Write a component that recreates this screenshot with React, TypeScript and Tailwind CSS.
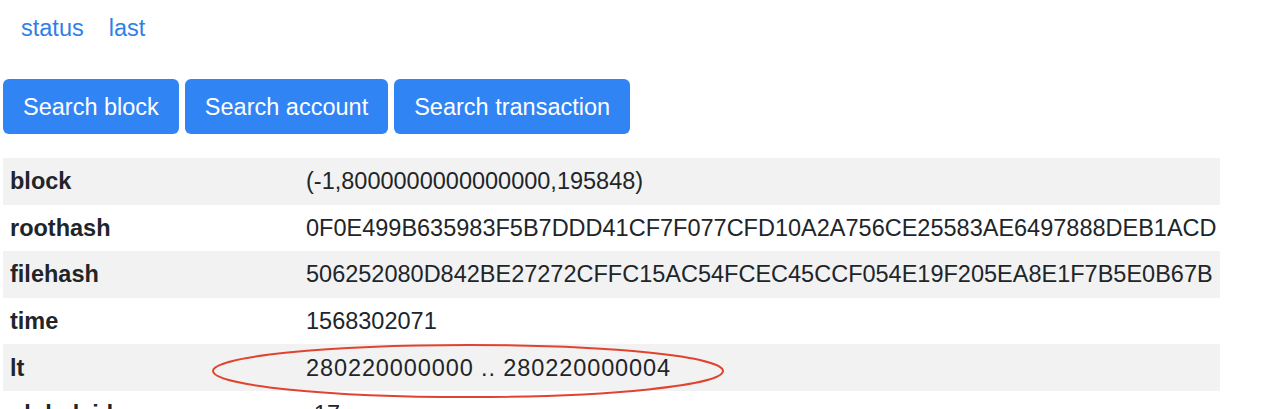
import React from "react";

const rows: { label: string; value: string; wide?: boolean }[] = [
  { label: "block", value: "(-1,8000000000000000,195848)" },
  { label: "roothash", value: "0F0E499B635983F5B7DDD41CF7F077CFD10A2A756CE25583AE6497888DEB1ACD" },
  { label: "filehash", value: "506252080D842BE27272CFFC15AC54FCEC45CCF054E19F205EA8E1F7B5E0B67B" },
  { label: "time", value: "1568302071" },
  { label: "lt", value: "280220000000 .. 280220000004", wide: true },
  { label: "global_id", value: "-17" },
];

const App = () => {
  return (
    <main className="relative w-[1280px] h-[409px] overflow-hidden bg-white text-[#212529] font-['Liberation_Sans',Arial,sans-serif]">
      <nav className="flex items-center gap-[25px] pl-[21px] pt-[9px] h-[46px] text-[23.5px] leading-[36px] text-[#2f7fe8]">
        <a href="#">status</a>
        <a href="#">last</a>
      </nav>

      <section className="flex gap-[6px] pl-[3px] mt-[33px]">
        {["Search block", "Search account", "Search transaction"].map((t) => (
          <button
            key={t}
            className="h-[55px] px-[20px] rounded-[6px] bg-[#3184f4] text-white text-[23.5px] leading-[36px]"
          >
            {t}
          </button>
        ))}
      </section>

      <table className="table-fixed ml-[3px] mt-[24px] w-[1217px] border-collapse text-[23.5px] leading-[36px]">
        <colgroup>
          <col className="w-[296px]" />
          <col />
        </colgroup>
        <tbody>
          {rows.map((r, i) => (
            <tr key={r.label} className={i % 2 === 0 ? "bg-[#f2f2f2]" : "bg-white"}>
              <td className="h-[46.6px] px-[7px] py-0 font-bold">{r.label}</td>
              <td className={"h-[46.6px] px-[7px] py-0 whitespace-nowrap " + (r.wide ? "tracking-[0.9px]" : "")}>
                {r.value}
              </td>
            </tr>
          ))}
        </tbody>
      </table>

      {/* annotation drawn over the lt row */}
      <svg className="absolute left-[210px] top-[343px]" width="516" height="60" viewBox="0 0 516 60">
        <ellipse cx="258" cy="28" rx="255" ry="26" fill="none" stroke="#e0442f" strokeWidth="2" />
      </svg>
    </main>
  );
};

export default App;
